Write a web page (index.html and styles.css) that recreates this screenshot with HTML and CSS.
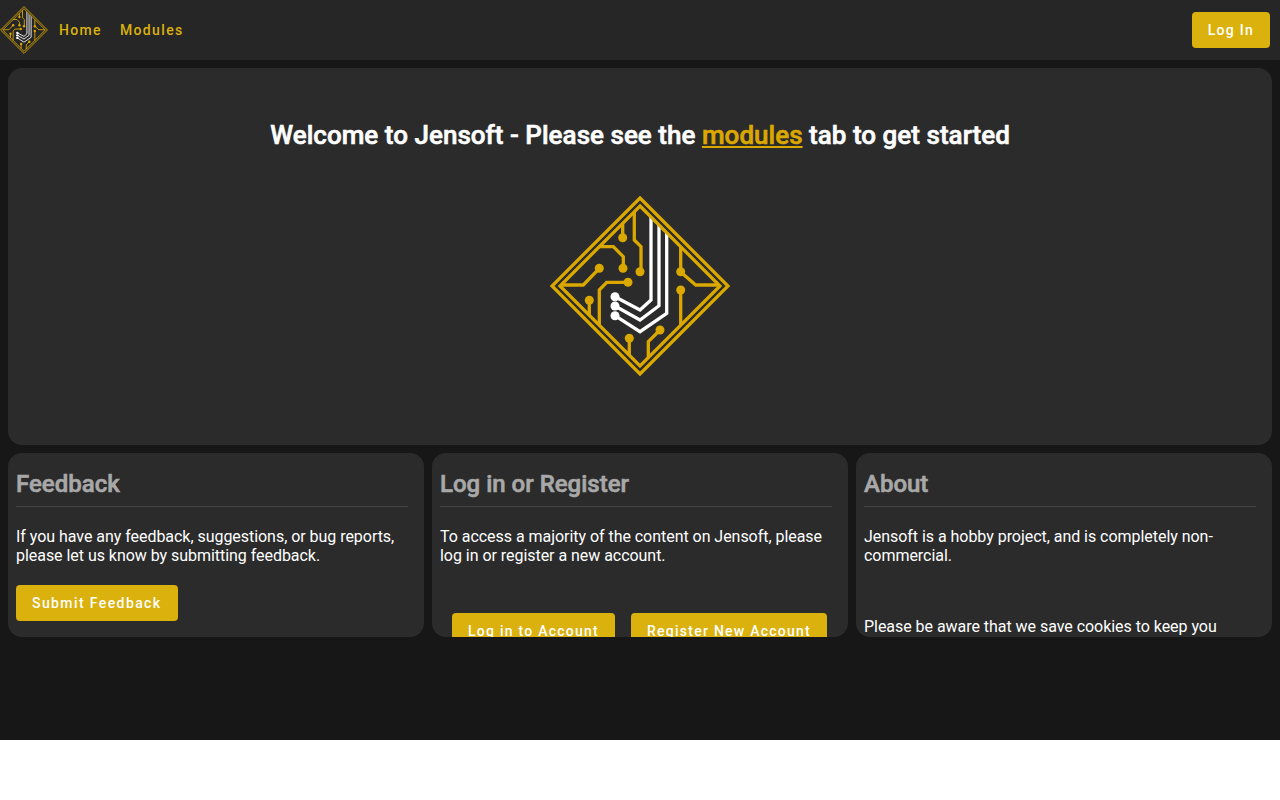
FILE: index.html
```html
<!DOCTYPE html>
<html lang="en">
<head>
    <meta charset="UTF-8" />
    <meta name="viewport" content="width=device-width, initial-scale=1" />
    <title>Jensoft</title>
    <link rel="stylesheet" href="styles.css">
</head>
<body>
    <div class="page">
        <header class="navbar">
            <nav class="nav-left">
                <svg class="nav-logo" viewBox="0 0 180 180"><use href="#jensoft-logo" /></svg>
                <a class="nav-link" href="#">Home</a>
                <a class="nav-link" href="#">Modules</a>
            </nav>
            <a class="btn" href="#">Log In</a>
        </header>

        <main class="content">
            <section class="card hero">
                <h1>Welcome to Jensoft - Please see the <a href="#">modules</a> tab to get started</h1>
                <svg class="hero-logo" viewBox="0 0 180 180">
                    <defs>
                        <clipPath id="j-clip">
                            <polygon points="50,0 78,0 178,100 178,180 50,180" />
                        </clipPath>
                    </defs>
                    <g id="jensoft-logo">
                        <g fill="none" stroke="#dba800" stroke-width="3.3">
                            <path d="M90 2 L178 90 L90 178 L2 90 Z" />
                            <path d="M90 10 L170 90 L90 170 L10 90 Z" />
                            <path d="M72.7 28 V42" />
                            <path d="M84.3 16 V44 L91 50.7 V76" />
                            <path d="M49 50.7 H63.3 L73.3 60.7 V72" />
                            <path d="M12 89 H33.3 L49.3 72.3" />
                            <path d="M78 86.3 H56.7 L49.3 94 V129" />
                            <path d="M39.3 104 V119.5" />
                            <path d="M130.7 51 V76 L145.7 89 H168" />
                            <path d="M130.7 94 V129" />
                            <path d="M79.3 142 V160" />
                            <path d="M110 134 L98.3 145.7 V162" />
                        </g>
                        <g fill="#dba800">
                            <circle cx="72.7" cy="41.7" r="4.5" />
                            <circle cx="90" cy="75.7" r="4.5" />
                            <circle cx="73" cy="72.3" r="4.5" />
                            <circle cx="49.3" cy="72.3" r="4.5" />
                            <circle cx="78" cy="86.3" r="4.5" />
                            <circle cx="39.3" cy="104.3" r="4.5" />
                            <circle cx="130.7" cy="75.7" r="4.5" />
                            <circle cx="130.7" cy="94" r="4.5" />
                            <circle cx="79.3" cy="142.3" r="4.5" />
                            <circle cx="110" cy="134" r="4.5" />
                        </g>
                        <g fill="none" stroke="#fff" stroke-width="3.3" clip-path="url(#j-clip)">
                            <path d="M101 15 V104 L90 114 L65 100.7" />
                            <path d="M109 15 V109.7 L90 124 L65 110" />
                            <path d="M116.7 15 V117.3 L90 135.7 L65 119.7" />
                        </g>
                        <g fill="#fff">
                            <circle cx="65" cy="100.7" r="4.5" />
                            <circle cx="65" cy="110" r="4.5" />
                            <circle cx="65" cy="119.7" r="4.5" />
                        </g>
                    </g>
                </svg>
            </section>

            <div class="card-row">
                <section class="card">
                    <h2>Feedback</h2>
                    <p>If you have any feedback, suggestions, or bug reports, please let us know by submitting feedback.</p>
                    <a class="btn" href="#">Submit Feedback</a>
                </section>

                <section class="card">
                    <h2>Log in or Register</h2>
                    <p>To access a majority of the content on Jensoft, please log in or register a new account.</p>
                    <div class="btn-group">
                        <a class="btn" href="#">Log in to Account</a>
                        <a class="btn" href="#">Register New Account</a>
                    </div>
                </section>

                <section class="card">
                    <h2>About</h2>
                    <p>Jensoft is a hobby project, and is completely non-commercial.</p>
                    <p class="spaced">Please be aware that we save cookies to keep you logged in.</p>
                </section>
            </div>
        </main>
    </div>
</body>
</html>
```

FILE: styles.css
```css
html {
    background: #fff;
}
body {
    margin: 0;
    font-family: Roboto, sans-serif;
    color: #fff;
}
.page {
    height: 740px;
    background: #171717;
    overflow: hidden;
}
.navbar {
    height: 60px;
    background: #262626;
    display: flex;
    justify-content: space-between;
    align-items: center;
    padding-right: 10px;
}
.nav-left {
    display: flex;
    align-items: center;
    gap: 18px;
}
.nav-logo {
    width: 48px;
    height: 48px;
    margin-right: -7px;
}
.nav-link {
    color: #dbb10d;
    font-size: 14px;
    font-weight: 500;
    letter-spacing: 1.35px;
    text-decoration: none;
}
.btn {
    display: inline-block;
    background: #dbb10d;
    color: #fff;
    font-size: 14px;
    font-weight: 500;
    line-height: 36px;
    letter-spacing: 1.25px;
    padding: 0 16px;
    border-radius: 4px;
    text-decoration: none;
    white-space: nowrap;
}
.card > .btn {
    letter-spacing: 1.4px;
}
.content {
    padding: 8px;
    display: flex;
    flex-direction: column;
    gap: 8px;
}
.card {
    background: #2b2b2b;
    border-radius: 14px;
    padding: 8px;
    height: 184px;
    box-sizing: border-box;
    overflow: hidden;
}
.hero {
    height: 377px;
    display: flex;
    flex-direction: column;
    align-items: center;
}
.hero h1 {
    margin: 43px 0 0;
    font-size: 26px;
    line-height: 32px;
    font-weight: 500;
    letter-spacing: 0.03px;
    -webkit-text-stroke: 0.6px currentColor;
}
.hero h1 a {
    color: #dba800;
}
.hero-logo {
    width: 180px;
    height: 180px;
    margin-top: 45px;
}
.card-row {
    display: grid;
    grid-template-columns: repeat(3, 1fr);
    gap: 8px;
}
.card h2 {
    margin: 0 8px 20px 0;
    padding: 9px 0 7px;
    font-size: 24px;
    line-height: 29px;
    font-weight: 500;
    -webkit-text-stroke: 0.6px currentColor;
    color: #a8a8a8;
    border-bottom: 1px solid #444;
}
.card p {
    margin: 0 0 20px;
    font-size: 16px;
    line-height: 19px;
    letter-spacing: -0.04px;
}
.card p.spaced {
    margin-top: 52px;
}
.btn-group {
    display: flex;
    gap: 16px;
    padding: 28px 12px 0;
}
```
